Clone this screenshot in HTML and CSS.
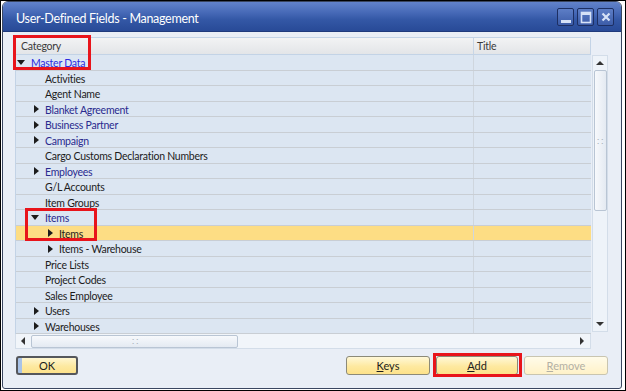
FILE: index.html
```html
<!DOCTYPE html>
<html>
<head>
<meta charset="UTF-8">
<title>User-Defined Fields - Management</title>
<link rel="stylesheet" href="styles.css">
</head>
<body>
<div class="shot">
  <div class="window">
    <div class="titlebar">
      <span class="title">User-Defined Fields - Management</span>
      <div class="wbtns">
        <span class="wbtn"><svg width="14" height="16" viewBox="0 0 14 16"><rect x="2" y="11" width="10" height="3" fill="#d6e2f7"/></svg></span>
        <span class="wbtn"><svg width="14" height="16" viewBox="0 0 14 16"><rect x="2.5" y="3.5" width="9" height="10" fill="none" stroke="#d6e2f7" stroke-width="1.6"/><rect x="2" y="3" width="10" height="3" fill="#d6e2f7"/></svg></span>
        <span class="wbtn"><svg width="14" height="16" viewBox="0 0 14 16"><path d="M3.5 4.5 L10.5 11.5 M10.5 4.5 L3.5 11.5" stroke="#d6e2f7" stroke-width="2.2"/></svg></span>
      </div>
    </div>
    <div class="content">
      <div class="grid">
        <div class="head">
          <div class="hcell cat">Category</div>
          <div class="hcell ttl">Title</div>
        </div>
        <div class="rows">
          <div class="row"><div class="cell cat lvl0"><span class="slot"><i class="down"></i></span><span class="master">Master Data</span></div><div class="cell ttl"></div></div>
          <div class="row"><div class="cell cat lvl1"><span class="slot"></span>Activities</div><div class="cell ttl"></div></div>
          <div class="row"><div class="cell cat lvl1"><span class="slot"></span>Agent Name</div><div class="cell ttl"></div></div>
          <div class="row"><div class="cell cat lvl1"><span class="slot"><i class="right"></i></span><span class="node">Blanket Agreement</span></div><div class="cell ttl"></div></div>
          <div class="row"><div class="cell cat lvl1"><span class="slot"><i class="right"></i></span><span class="node">Business Partner</span></div><div class="cell ttl"></div></div>
          <div class="row"><div class="cell cat lvl1"><span class="slot"><i class="right"></i></span><span class="node">Campaign</span></div><div class="cell ttl"></div></div>
          <div class="row"><div class="cell cat lvl1"><span class="slot"></span>Cargo Customs Declaration Numbers</div><div class="cell ttl"></div></div>
          <div class="row"><div class="cell cat lvl1"><span class="slot"><i class="right"></i></span><span class="node">Employees</span></div><div class="cell ttl"></div></div>
          <div class="row"><div class="cell cat lvl1"><span class="slot"></span>G/L Accounts</div><div class="cell ttl"></div></div>
          <div class="row"><div class="cell cat lvl1"><span class="slot"></span>Item Groups</div><div class="cell ttl"></div></div>
          <div class="row"><div class="cell cat lvl1"><span class="slot"><i class="down"></i></span><span class="node">Items</span></div><div class="cell ttl"></div></div>
          <div class="row sel"><div class="cell cat lvl2"><span class="slot"><i class="right"></i></span>Items</div><div class="cell ttl"></div></div>
          <div class="row"><div class="cell cat lvl2"><span class="slot"><i class="right"></i></span>Items - Warehouse</div><div class="cell ttl"></div></div>
          <div class="row"><div class="cell cat lvl1"><span class="slot"></span>Price Lists</div><div class="cell ttl"></div></div>
          <div class="row"><div class="cell cat lvl1"><span class="slot"></span>Project Codes</div><div class="cell ttl"></div></div>
          <div class="row"><div class="cell cat lvl1"><span class="slot"></span>Sales Employee</div><div class="cell ttl"></div></div>
          <div class="row"><div class="cell cat lvl1"><span class="slot"><i class="right"></i></span>Users</div><div class="cell ttl"></div></div>
          <div class="row"><div class="cell cat lvl1"><span class="slot"><i class="right"></i></span>Warehouses</div><div class="cell ttl"></div></div>
        </div>
        <div class="vscroll">
          <i class="up"></i>
          <div class="vthumb"><span class="grip">&#8759;</span></div>
          <i class="down sm"></i>
        </div>
        <div class="hscroll">
          <i class="left"></i>
          <div class="hthumb"><span class="grip">&#8759;</span></div>
          <i class="right sm"></i>
        </div>
        <span class="mark mark-cat"></span>
        <span class="mark mark-items"></span>
      </div>
      <div class="footer">
        <button class="btn ok">OK</button>
        <div class="spacer"></div>
        <button class="btn"><u>K</u>eys</button>
        <button class="btn add"><u>A</u>dd</button>
        <button class="btn off"><u>R</u>emove</button>
        <span class="mark mark-add"></span>
      </div>
    </div>
  </div>
</div>
</body>
</html>
```

FILE: styles.css
```css
* {
	margin: 0;
	padding: 0;
	box-sizing: border-box;
}
body {
	background: #ffffff;
	font-family: Lato, "Liberation Sans", sans-serif;
	font-size: 10.5px;
	letter-spacing: -0.25px;
	color: #1c1c1c;
}
.shot {
	width: 626px;
	height: 391px;
	border: 1px solid #000;
	padding: 0 3px 1px 1px;
	display: flex;
}
.window {
	flex: 1;
	display: flex;
	flex-direction: column;
	border: 1px solid #3a4660;
	border-radius: 6px 6px 3px 3px;
	background: #e9eef6;
	overflow: hidden;
}
.titlebar {
	height: 30px;
	flex: none;
	display: flex;
	align-items: center;
	padding: 0 7px 0 13px;
	background: linear-gradient(#6283cb, #4467b5 40%, #3458a6 60%, #284a97);
	border-bottom: 1px solid #1f3a7c;
}
.title {
	flex: 1;
	color: #ffffff;
	font-size: 12.5px;
	letter-spacing: -0.3px;
	padding-top: 3px;
}
.wbtns {
	display: flex;
	gap: 3px;
	padding-top: 1px;
}
.wbtn {
	width: 17px;
	height: 18px;
	display: flex;
	align-items: center;
	justify-content: center;
	border: 1px solid #1d2f63;
	border-radius: 2px;
	background: linear-gradient(#5d7ec6, #3c5ca8);
}
.content {
	flex: 1;
	display: flex;
	flex-direction: column;
	padding: 5px 13px 0 12px;
}
.grid {
	position: relative;
	display: grid;
	grid-template-columns: 576px 17px;
	grid-template-rows: 18px 279px 15px;
}
.head {
	display: flex;
	background: linear-gradient(#f2f3f4, #e3e5e8);
	border: 1px solid #c3d3e6;
	color: #3a3a3a;
}
.hcell {
	line-height: 16px;
	padding-left: 5px;
}
.cat {
	width: 457px;
}
.ttl {
	flex: 1;
	border-left: 1px solid #cfd6de;
}
.hcell.ttl {
	padding-left: 3px;
	border-left-color: #c8d6e6;
}
.rows {
	grid-column: 1;
	grid-row: 2;
	border-left: 1px solid #c3d3e6;
	background: #dce6f2;
}
.row {
	display: flex;
	height: 15.5px;
	border-bottom: 1px solid #c9ced4;
	background: #dce6f2;
}
.row.sel {
	background: #fddd84;
}
.cell {
	display: flex;
	align-items: center;
	white-space: nowrap;
	line-height: 14px;
	padding-top: 2px;
}
.lvl0 {
	padding-left: 1px;
}
.lvl1 {
	padding-left: 15px;
}
.lvl2 {
	padding-left: 29px;
}
.slot {
	width: 14px;
	flex: none;
	display: flex;
	align-items: center;
	margin-top: -1px;
}
.master {
	color: #2b2be0;
}
.node {
	color: #2a2a8e;
}
i {
	display: block;
	width: 0;
	height: 0;
}
i.down {
	border-top: 5px solid #1c1c1c;
	border-left: 4px solid transparent;
	border-right: 4px solid transparent;
}
i.right {
	margin-left: 3px;
	border-left: 5px solid #1c1c1c;
	border-top: 4px solid transparent;
	border-bottom: 4px solid transparent;
}
i.up {
	border-bottom: 4px solid #333;
	border-left: 4px solid transparent;
	border-right: 4px solid transparent;
}
i.left {
	border-right: 4px solid #333;
	border-top: 4px solid transparent;
	border-bottom: 4px solid transparent;
}
i.down.sm {
	border-top-width: 4px;
	border-top-color: #333;
}
i.right.sm {
	margin-left: 0;
	border-left-width: 4px;
	border-left-color: #333;
}
.vscroll {
	grid-column: 2;
	grid-row: 2;
	margin-left: 1px;
	height: 277px;
	background: #eef3f9;
	border: 1px solid #d3dde9;
	display: flex;
	flex-direction: column;
	align-items: center;
	padding: 5px 0 5px;
}
.vthumb {
	width: 13px;
	height: 141px;
	margin: 5px 0 auto;
	border: 1px solid #b9c5d4;
	border-radius: 2px;
	background: linear-gradient(90deg, #f7f9fc, #e4eaf2);
	display: flex;
	align-items: center;
	justify-content: center;
}
.grip {
	color: #aab4c0;
	font-size: 10px;
	line-height: 10px;
}
.hscroll {
	grid-column: 1;
	grid-row: 3;
	display: flex;
	align-items: center;
	background: #f1f5fa;
	border: 1px solid #d3dde9;
	border-top: none;
	padding: 0 6px 0 5px;
}
.hthumb {
	width: 207px;
	height: 13px;
	margin: 0 auto 0 6px;
	border: 1px solid #b9c5d4;
	border-radius: 2px;
	background: linear-gradient(#f7f9fc, #e4eaf2);
	display: flex;
	align-items: center;
	justify-content: center;
}
.footer {
	position: relative;
	display: flex;
	gap: 6px;
	margin-top: 7px;
	padding-left: 1px;
}
.spacer {
	flex: 1;
}
.btn {
	height: 19px;
	width: 84px;
	font: inherit;
	letter-spacing: 0;
	font-size: 11px;
	color: #1c1c1c;
	border: 1px solid #8c8a78;
	border-radius: 3px;
	background: linear-gradient(#fff8d8, #fee9a0 55%, #fde28a);
	line-height: 16px;
}
.btn u {
	text-decoration: underline;
}
.btn.ok {
	width: 62px;
	border: 2px solid #55575c;
	background: linear-gradient(90deg, #a9c3e8 0, #a9c3e8 4px, transparent 4px), linear-gradient(#fff6d0, #fde9a0 55%, #fde28c);
}
.btn.add {
	width: 82px;
}
.btn.off {
	color: #b3b0a4;
	border-color: #c9c5b0;
	background: linear-gradient(#fffbea, #fff2c8);
}
.mark {
	position: absolute;
	border: 3px solid #e8141b;
}
.mark-cat {
	left: -2px;
	top: -2px;
	width: 78px;
	height: 35px;
}
.mark-items {
	left: 10px;
	top: 171px;
	width: 72px;
	height: 33px;
}
.mark-add {
	right: 86px;
	top: -3px;
	width: 89px;
	height: 24px;
}
```
